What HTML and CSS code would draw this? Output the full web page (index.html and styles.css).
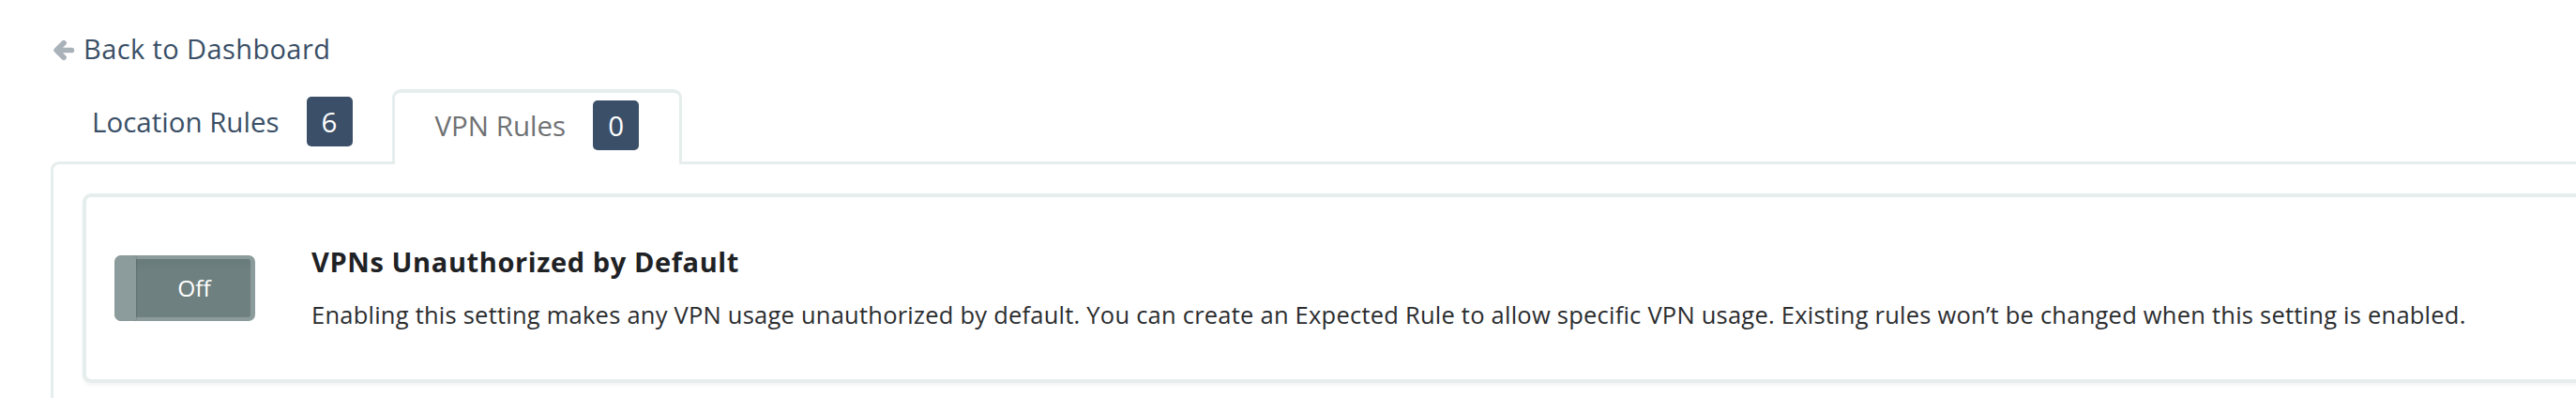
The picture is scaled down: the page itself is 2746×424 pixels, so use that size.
FILE: index.html
```html
<!DOCTYPE html>
<html lang="en">
<head>
<meta charset="utf-8">
<title>VPN Rules</title>
<link rel="stylesheet" href="styles.css">
</head>
<body>
<div class="page">
  <a class="back" href="#">
    <svg class="back-icon" viewBox="0 0 24 24" aria-hidden="true">
      <path d="M20.5 12H6M12.5 4.5L5 12l7.5 7.5" fill="none" stroke="currentColor" stroke-width="5.5" stroke-linecap="round" stroke-linejoin="round"/>
    </svg>
    <span>Back to Dashboard</span>
  </a>
  <div class="tabs">
    <div class="tab">
      <span class="tab-label">Location Rules</span>
      <span class="badge">6</span>
    </div>
    <div class="tab tab-active">
      <span class="tab-label">VPN Rules</span>
      <span class="badge">0</span>
    </div>
  </div>
  <div class="panel">
    <div class="card">
      <div class="toggle">
        <span class="toggle-knob"></span>
        <span class="toggle-label">Off</span>
      </div>
      <div class="setting-text">
        <div class="setting-title">VPNs Unauthorized by Default</div>
        <div class="setting-desc">Enabling this setting makes any VPN usage unauthorized by default. You can create an Expected Rule to allow specific VPN usage. Existing rules won’t be changed when this setting is enabled.</div>
      </div>
    </div>
  </div>
</div>
</body>
</html>
```
FILE: styles.css
```css
html, body {
  margin: 0;
  padding: 0;
  background: #ffffff;
  overflow: hidden;
}

body {
  font-family: "Open Sans", "Liberation Sans", sans-serif;
  color: #2b2b2b;
}

.page {
  width: 2800px;
  padding: 31px 0 0 54px;
  box-sizing: border-box;
}

.back {
  display: inline-flex;
  align-items: center;
  gap: 9px;
  margin-left: 1px;
  font-size: 29px;
  letter-spacing: 0.4px;
  line-height: 42px;
  color: #3a4f66;
  text-decoration: none;
}

.back-icon {
  width: 25px;
  height: 25px;
  color: #a9b1b9;
  margin-top: 2px;
}

.tabs {
  display: flex;
  align-items: flex-end;
  margin-top: 22px;
  position: relative;
  z-index: 1;
}

.tab {
  display: flex;
  align-items: center;
  padding: 8px 42px 16px 44px;
  font-size: 29.5px;
  line-height: 53px;
  color: #3a4f66;
}

.tab-active {
  color: #6f7173;
  background: #ffffff;
  border: 3px solid #e6eded;
  border-top-width: 4px;
  border-bottom: none;
  border-radius: 9px 9px 0 0;
  padding: 8px 43px 15px 43px;
  margin-bottom: -3px;
}

.badge {
  margin-left: 29px;
  min-width: 49px;
  height: 53px;
  box-sizing: border-box;
  padding: 0 15px;
  border-radius: 5px;
  background: #3b5068;
  color: #ffffff;
  text-align: center;
  font-size: 29.5px;
  line-height: 53px;
}

.panel {
  border: 3px solid #e6eded;
  border-radius: 9px;
  padding: 31px 30px 60px 31px;
  min-height: 300px;
}

.card {
  display: flex;
  align-items: center;
  gap: 60px;
  border: 4px solid #e6eded;
  border-radius: 9px;
  padding: 50px 30px;
  box-shadow: 0 3px 3px rgba(0, 0, 0, 0.04);
}

.toggle {
  flex: 0 0 auto;
  display: flex;
  width: 150px;
  height: 70px;
  box-sizing: border-box;
  border-radius: 7px;
  background: #8c9b9b;
  overflow: hidden;
}

.toggle-knob {
  width: 23px;
  flex: 0 0 auto;
  background: #8c9b9b;
  box-shadow: 1px 0 1px rgba(0, 0, 0, 0.12);
  border-radius: 7px 3px 3px 7px;
  position: relative;
  z-index: 1;
}

.toggle-label {
  flex: 1 1 auto;
  margin: 4px 5px 4px 0;
  padding-left: 2px;
  border-radius: 0 3px 3px 0;
  background: linear-gradient(#687a7a, #6f8080 20%, #6f8080);
  color: #ffffff;
  font-size: 24.5px;
  line-height: 62px;
  text-align: center;
}

.setting-text {
  display: flex;
  flex-direction: column;
}

.setting-title {
  font-size: 29px;
  letter-spacing: 0.6px;
  font-weight: 700;
  line-height: 38px;
  color: #1f2225;
}

.setting-desc {
  margin-top: 19px;
  font-size: 25.5px;
  letter-spacing: 0.23px;
  line-height: 36.75px;
  color: #2b2d2f;
}
```
